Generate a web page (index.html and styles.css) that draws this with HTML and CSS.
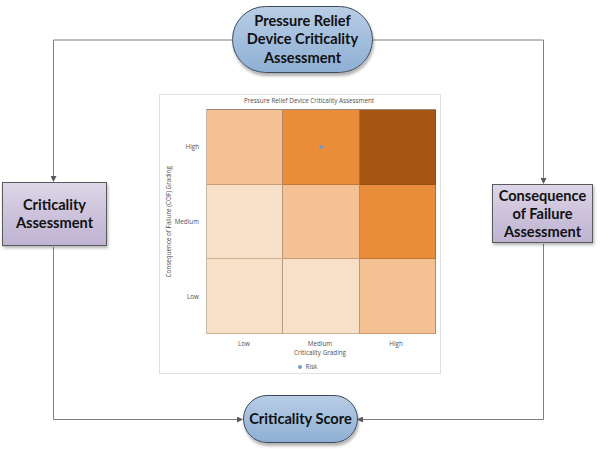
FILE: index.html
```html
<!DOCTYPE html>
<html>
<head>
<meta charset="utf-8">
<link rel="stylesheet" href="styles.css">
</head>
<body>
<div class="canvas">
  <svg class="wires" width="603" height="449" viewBox="0 0 603 449">
    <defs>
      <marker id="arr" markerWidth="6" markerHeight="6" refX="5" refY="3" orient="auto" markerUnits="userSpaceOnUse">
        <path d="M0,0 L6,3 L0,6 Z" fill="#595959"/>
      </marker>
    </defs>
    <polyline points="232,40 53.5,40 53.5,181" fill="none" stroke="#7f7f7f" stroke-width="1" marker-end="url(#arr)"/>
    <polyline points="372,40 543.5,40 543.5,183" fill="none" stroke="#7f7f7f" stroke-width="1" marker-end="url(#arr)"/>
    <polyline points="53.5,247 53.5,419.5 242,419.5" fill="none" stroke="#7f7f7f" stroke-width="1" marker-end="url(#arr)"/>
    <polyline points="543.5,244 543.5,419.5 358,419.5" fill="none" stroke="#7f7f7f" stroke-width="1" marker-end="url(#arr)"/>
  </svg>

  <div class="node oval oval-top">Pressure Relief<br>Device Criticality<br>Assessment</div>
  <div class="node box box-left">Criticality<br>Assessment</div>
  <div class="node box box-right">Consequence<br>of Failure<br>Assessment</div>
  <div class="node oval oval-bottom">Criticality Score</div>

  <div class="node chart">
    <div class="chart-title">Pressure Relief Device Criticality Assessment</div>
    <div class="chart-body">
      <div class="y-title"><span>Consequence of Failure (COF) Grading</span></div>
      <div class="y-labels">
        <div>High</div>
        <div>Medium</div>
        <div>Low</div>
      </div>
      <div class="plot">
        <div class="cell c2"></div>
        <div class="cell c3"><span class="dot"></span></div>
        <div class="cell c4"></div>
        <div class="cell c1"></div>
        <div class="cell c2"></div>
        <div class="cell c3"></div>
        <div class="cell c1"></div>
        <div class="cell c1"></div>
        <div class="cell c2"></div>
      </div>
    </div>
    <div class="x-labels">
      <div>Low</div>
      <div>Medium</div>
      <div>High</div>
    </div>
    <div class="x-title">Criticality Grading</div>
    <div class="legend"><span class="ldot"></span>Risk</div>
  </div>
</div>
</body>
</html>
```
FILE: styles.css
```css
html, body {
  margin: 0;
  padding: 0;
  background: #ffffff;
}
.canvas {
  position: relative;
  width: 603px;
  height: 449px;
  overflow: hidden;
  font-family: "Lato", "Open Sans", sans-serif;
}
.wires {
  position: absolute;
  left: 0;
  top: 0;
}
.node {
  position: absolute;
  box-sizing: border-box;
}
.oval {
  display: flex;
  align-items: center;
  justify-content: center;
  text-align: center;
  font-weight: bold;
  font-size: 14.6px;
  line-height: 18.5px;
  color: #111;
  background: linear-gradient(to bottom, #b9cde5 0%, #a3bedd 50%, #8eafd4 100%);
  border: 1px solid #3b4a5a;
  box-shadow: 1px 3px 3px rgba(0,0,0,0.3);
}
.oval-top {
  left: 232px;
  top: 6px;
  width: 141px;
  height: 67px;
  border-radius: 34px;
}
.oval-bottom {
  left: 243px;
  top: 395px;
  width: 115px;
  height: 48px;
  border-radius: 24px;
}
.box {
  display: flex;
  align-items: center;
  justify-content: center;
  text-align: center;
  font-weight: bold;
  font-size: 14.6px;
  line-height: 18px;
  color: #111;
  background: linear-gradient(to bottom, #ddd6e7 0%, #cdc3dc 50%, #bfb3d2 100%);
  border: 1px solid #5a5a5a;
  box-shadow: 1px 2px 3px rgba(0,0,0,0.3);
}
.box-left {
  left: 2px;
  top: 182px;
  width: 105px;
  height: 64px;
}
.box-right {
  left: 492px;
  top: 184px;
  width: 101px;
  height: 59px;
}
.chart {
  left: 159px;
  top: 94px;
  width: 282px;
  height: 280px;
  background: #fff;
  border: 1px solid #e0e0e0;
  font-family: "Open Sans", "Noto Sans", sans-serif;
  font-size: 6.3px;
  color: #505050;
  display: flex;
  flex-direction: column;
}
.chart-title {
  height: 14px;
  line-height: 9px;
  padding-top: 1px;
  box-sizing: border-box;
  text-align: center;
  padding-left: 18px;
}
.chart-body {
  display: flex;
  height: 225px;
}
.y-title {
  width: 16px;
  display: flex;
  align-items: center;
  justify-content: center;
}
.y-title span {
  writing-mode: vertical-rl;
  transform: rotate(180deg);
  white-space: nowrap;
}
.y-labels {
  width: 30px;
  display: flex;
  flex-direction: column;
}
.y-labels div {
  flex: 1;
  display: flex;
  align-items: center;
  justify-content: flex-end;
  padding-right: 7px;
}
.plot {
  width: 229px;
  display: grid;
  grid-template-columns: repeat(3, 1fr);
  grid-template-rows: repeat(3, 1fr);
  border-top: 1px solid #9a8a7c;
  border-left: 1px solid #c9b9a9;
}
.cell {
  border-right: 1px solid rgba(110, 70, 35, 0.45);
  border-bottom: 1px solid rgba(110, 70, 35, 0.3);
  display: flex;
  align-items: center;
  justify-content: center;
}
.c1 { background: #f8dfc7; }
.c2 { background: #f3c193; }
.c3 { background: #e98d3b; }
.c4 { background: #a45612; }
.dot {
  width: 4px;
  height: 4px;
  border-radius: 50%;
  background: #6a9fd0;
}
.x-labels {
  display: grid;
  grid-template-columns: repeat(3, 76px);
  margin-left: 46px;
  margin-top: 6px;
  text-align: center;
  line-height: 8px;
}
.x-title {
  text-align: center;
  margin-left: 46px;
  width: 228px;
  line-height: 9px;
}
.legend {
  margin-top: 6px;
  display: flex;
  align-items: center;
  justify-content: center;
  padding-left: 15px;
  line-height: 8px;
}
.ldot {
  width: 4px;
  height: 4px;
  border-radius: 50%;
  background: #6a9fd0;
  margin-right: 4px;
}
```
